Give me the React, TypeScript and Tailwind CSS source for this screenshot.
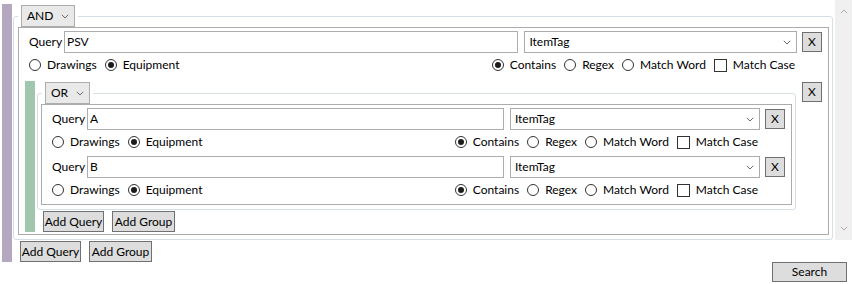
import React from "react";

const Chevron = ({ className = "" }: { className?: string }) => (
  <svg width="8" height="5" viewBox="0 0 8 5" className={className}>
    <path d="M0.8 0.8 L4 4 L7.2 0.8" fill="none" stroke="#6a6a6a" strokeWidth="1" />
  </svg>
);

function Radio({ checked, label }: { checked?: boolean; label: string }) {
  return (
    <div className="flex items-center mr-[8px]">
      <span className="w-[12px] h-[12px] rounded-full border border-[#333333] bg-white flex items-center justify-center">
        {checked && <span className="w-[6px] h-[6px] rounded-full bg-[#1c1c1c]" />}
      </span>
      <span className="ml-[6px]">{label}</span>
    </div>
  );
}

function Check({ label }: { label: string }) {
  return (
    <div className="flex items-center">
      <span className="w-[13px] h-[13px] border border-[#333333] bg-white" />
      <span className="ml-[6px]">{label}</span>
    </div>
  );
}

function Btn({ children, className = "" }: { children: React.ReactNode; className?: string }) {
  return (
    <div
      className={`flex items-center justify-center bg-[#dddddd] border border-[#707070] leading-none whitespace-nowrap ${className}`}
    >
      {children}
    </div>
  );
}

function QueryRow({ value }: { value: string }) {
  return (
    <div className="flex flex-col pl-[10px]">
      <div className="flex items-center h-[22px]">
        <span className="w-[35px] shrink-0">Query</span>
        <div className="flex-[5] min-w-0">
          <div className="w-full h-[22px] border border-[#abadb3] bg-white flex items-center pl-[2px]">
            {value}
          </div>
        </div>
        <div className="flex-[3] min-w-0 ml-[6px]">
          <div className="w-full h-[22px] border border-[#acacac] bg-white flex items-center pl-[4px] pr-[5px] justify-between">
            <span>ItemTag</span>
            <Chevron />
          </div>
        </div>
        <Btn className="ml-[5px] w-[20px] h-[20px] shrink-0">X</Btn>
      </div>
      <div className="flex items-center justify-between h-[18px] mt-[3px] pr-[27px]">
        <div className="flex items-center">
          <Radio label="Drawings" />
          <Radio label="Equipment" checked />
        </div>
        <div className="flex items-center">
          <Radio label="Contains" checked />
          <Radio label="Regex" />
          <Radio label="Match Word" />
          <Check label="Match Case" />
        </div>
      </div>
    </div>
  );
}

function Header({ label }: { label: string }) {
  return (
    <div className="absolute -top-[12px] left-[4px] bg-white px-[3px]">
      <div className="h-[22px] flex items-center gap-[8px] pl-[5px] pr-[5px] bg-[#e9e9e9] border border-[#adadad]">
        <span>{label}</span>
        <Chevron />
      </div>
    </div>
  );
}

function ButtonsRow({ className = "" }: { className?: string }) {
  return (
    <div className={`flex items-center gap-[8px] mt-[1px] ${className}`}>
      <Btn className="w-[61px] h-[21px]">Add Query</Btn>
      <Btn className="w-[63px] h-[21px]">Add Group</Btn>
    </div>
  );
}

function NestedGroup() {
  return (
    <div className="flex items-stretch pl-[6px] pr-[6px]">
      <div className="w-[10px] bg-[#a0c6ae] shrink-0" />
      <div className="flex flex-col ml-[2px] w-[759px]">
        <div className="relative mt-[12px] border border-[#d5dfe5] rounded-[3px] pt-[10px] pl-[3px] pr-[3px] pb-[4px]">
          <Header label="OR" />
          <div className="border border-[#acacac] pt-[3px] pb-[5px] pr-[6px] flex flex-col gap-[5px]">
            <QueryRow value="A" />
            <QueryRow value="B" />
          </div>
        </div>
        <ButtonsRow className="ml-[6px]" />
      </div>
      <div className="flex-1 flex justify-end pt-[1px]">
        <Btn className="w-[20px] h-[20px]">X</Btn>
      </div>
    </div>
  );
}

export default function App() {
  return (
    <div className="w-[854px] h-[284px] bg-white text-[12px] text-black font-['Lato',sans-serif] whitespace-nowrap flex flex-col overflow-hidden">
      <div className="flex items-start">
        <div className="flex items-stretch pt-[4px] pl-[2px]">
          <div className="w-[10px] bg-[#b4a7c0] shrink-0" />
          <div className="flex flex-col ml-[1px] w-[820px]">
            <div className="relative mt-[12px] border border-[#d5dfe5] rounded-[3px] pt-[10px] pl-[4px] pr-[3px] pb-[4px]">
              <Header label="AND" />
              <div className="border border-[#acacac] pt-[3px] pb-[2px] pr-[6px] flex flex-col gap-[7px]">
                <QueryRow value="PSV" />
                <div className="-mr-[6px]">
                  <NestedGroup />
                </div>
              </div>
            </div>
            <ButtonsRow className="ml-[7px]" />
          </div>
        </div>
        <div className="ml-[2px] w-[17px] h-[240px] bg-[#f0f0f0] flex flex-col items-center justify-between py-[9px]">
          <Chevron className="rotate-180 opacity-50" />
          <Chevron className="opacity-50" />
        </div>
      </div>
      <div className="flex justify-end pr-[7px]">
        <Btn className="w-[75px] h-[20px]">Search</Btn>
      </div>
    </div>
  );
}
